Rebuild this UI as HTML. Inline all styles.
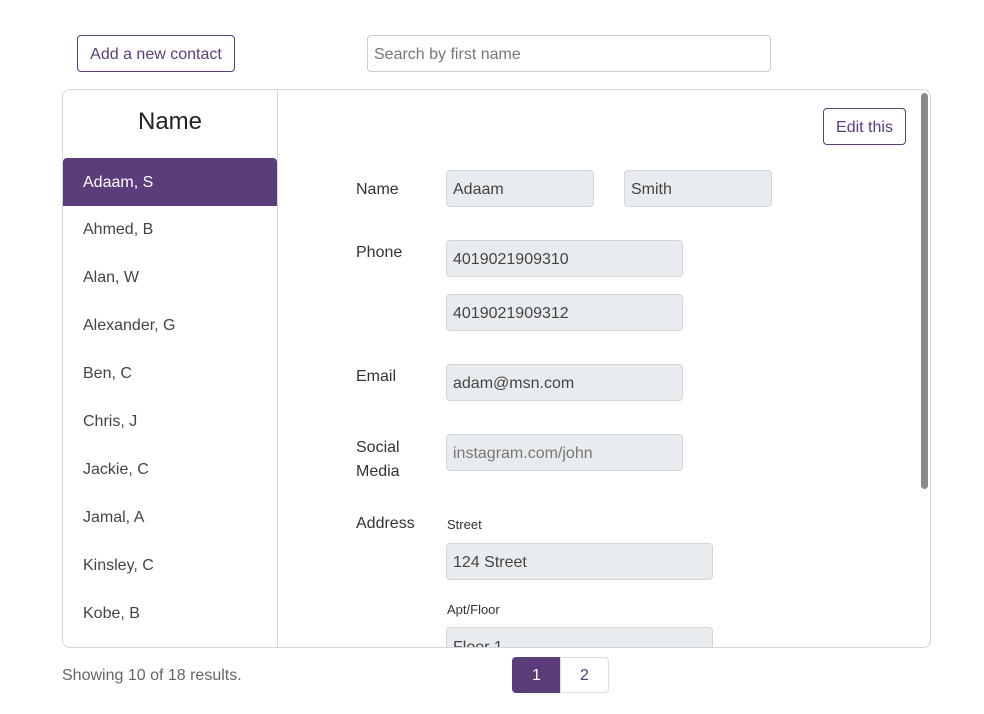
<!DOCTYPE html>
<html><head><style>
*{box-sizing:border-box;margin:0;padding:0}
body{width:984px;height:714px;background:#fff;font-family:"Liberation Sans",Arial,sans-serif;position:relative;overflow:hidden;color:#333}
.abs{position:absolute}
.btn{border:1px solid #5a3d7a;color:#5a3d7a;border-radius:4px;background:#fff;font-size:16px;display:flex;align-items:center;justify-content:center;padding-top:2px}
.inp{position:absolute;background:#e9ecef;border:1px solid #d3d7dc;border-radius:4px;font-size:16px;color:#444;padding-left:6px;padding-top:2px;display:flex;align-items:center}
.lbl{position:absolute;left:356px;font-size:16px;color:#333}
.item{position:absolute;left:83px;font-size:16px;color:#444}
.sm{position:absolute;left:447px;font-size:13px;color:#333}
</style></head><body>
<div class="abs btn" style="left:77px;top:35px;width:158px;height:37px">Add a new contact</div>
<div class="abs" style="left:367px;top:35px;width:404px;height:37px;border:1px solid #ccc;border-radius:4px;padding-left:6px;padding-top:2px;display:flex;align-items:center;font-size:16px;color:#777">Search by first name</div>
<div class="abs" style="left:62px;top:89px;width:869px;height:559px;border:1px solid #d6d6d6;border-radius:8px;overflow:hidden">
 <div class="abs" style="left:214px;top:0;width:1px;height:559px;background:#d6d6d6"></div>
 <div class="abs" style="left:0;top:18px;width:214px;text-align:center;font-size:24px;color:#222">Name</div>
 <div class="abs" style="left:0;top:68px;width:214px;height:48px;background:#5a3d7a;border-radius:4px 4px 0 0"></div>
 <div class="abs" style="left:858px;top:3px;width:7px;height:396px;background:#8a8a8a;border-radius:4px"></div>
</div>
<div class="item" style="top:174px;color:#fff">Adaam, S</div>
<div class="item" style="top:221px">Ahmed, B</div>
<div class="item" style="top:269px">Alan, W</div>
<div class="item" style="top:317px">Alexander, G</div>
<div class="item" style="top:365px">Ben, C</div>
<div class="item" style="top:413px">Chris, J</div>
<div class="item" style="top:461px">Jackie, C</div>
<div class="item" style="top:509px">Jamal, A</div>
<div class="item" style="top:557px">Kinsley, C</div>
<div class="item" style="top:605px">Kobe, B</div>
<div class="abs btn" style="left:823px;top:108px;width:83px;height:37px">Edit this</div>
<div class="lbl" style="top:181px">Name</div>
<div class="inp" style="left:446px;top:170px;width:148px;height:37px">Adaam</div>
<div class="inp" style="left:624px;top:170px;width:148px;height:37px">Smith</div>
<div class="lbl" style="top:244px">Phone</div>
<div class="inp" style="left:446px;top:240px;width:237px;height:37px">4019021909310</div>
<div class="inp" style="left:446px;top:294px;width:237px;height:37px">4019021909312</div>
<div class="lbl" style="top:368px">Email</div>
<div class="inp" style="left:446px;top:364px;width:237px;height:37px">adam@msn.com</div>
<div class="lbl" style="top:436px;line-height:24px">Social<br>Media</div>
<div class="inp" style="left:446px;top:434px;width:237px;height:37px;color:#777">instagram.com/john</div>
<div class="lbl" style="top:515px">Address</div>
<div class="sm" style="top:517px">Street</div>
<div class="inp" style="left:446px;top:543px;width:267px;height:37px">124 Street</div>
<div class="sm" style="top:602px">Apt/Floor</div>
<div class="abs" style="left:446px;top:627px;width:267px;height:20px;overflow:hidden"><div class="inp" style="left:0;top:0;width:267px;height:37px;padding-top:4px">Floor 1</div></div>
<div class="abs" style="left:62px;top:667px;font-size:16px;color:#666">Showing 10 of 18 results.</div>
<div class="abs" style="left:512px;top:657px;width:49px;height:36px;background:#5a3d7a;color:#fff;border-radius:4px 0 0 4px;display:flex;align-items:center;justify-content:center;font-size:16px;padding-top:1px">1</div>
<div class="abs" style="left:560px;top:657px;width:49px;height:36px;border:1px solid #ddd;color:#5a3d7a;border-radius:0 4px 4px 0;display:flex;align-items:center;justify-content:center;font-size:16px;padding-top:1px">2</div>
</body></html>
